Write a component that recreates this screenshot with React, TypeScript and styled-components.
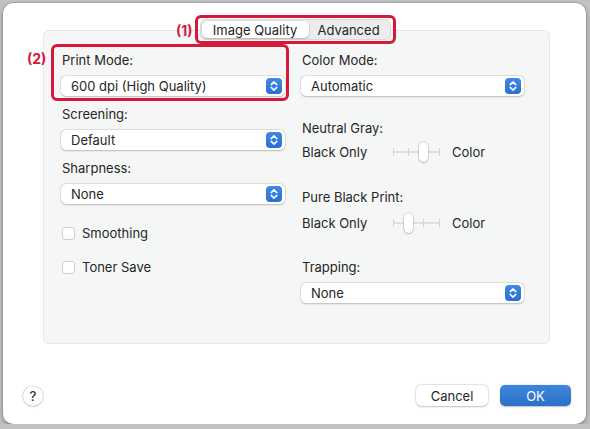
import React from 'react';
import styled, { createGlobalStyle } from 'styled-components';

const GlobalStyle = createGlobalStyle`
  html, body {
    margin: 0;
    padding: 0;
    background: #c2c2c2;
  }
  body {
    font-family: Inter, "Noto Sans", "Liberation Sans", sans-serif;
    font-size: 13px;
    color: #262626;
  }
`;

const Window = styled.div`
  width: 583px;
  height: 421px;
  margin: 3px 0 0 3px;
  box-sizing: border-box;
  background: #fff;
  border-radius: 10px;
  box-shadow: 0 0 0 0.5px rgba(0, 0, 0, 0.25), 0 3px 6px rgba(0, 0, 0, 0.25);
  display: flex;
  flex-direction: column;
  padding: 12px 15px 18px 20px;
`;

const TabsRow = styled.div`
  display: flex;
  justify-content: center;
  padding-right: 4px;
  position: relative;
  z-index: 1;
`;

const Callout = styled.div`
  position: relative;
  border: 3px solid #d6183a;
  border-radius: 6px;
  padding: 1px 2px;
  background: transparent;
`;

const CalloutTag = styled.span`
  position: absolute;
  right: calc(100% + 5px);
  top: 50%;
  transform: translateY(-50%);
  color: #d6183a;
  font-weight: 700;
  font-size: 14px;
  white-space: nowrap;
`;

const Segmented = styled.div`
  display: flex;
  height: 21px;
  box-sizing: border-box;
  background: #ececec;
  border: 0.5px solid #dadada;
  border-radius: 6px;
  padding: 1px;
`;

const Tab = styled.div<{ $active?: boolean }>`
  display: flex;
  align-items: center;
  justify-content: center;
  width: ${(p) => (p.$active ? '107px' : '80px')};
  border-radius: 5px;
  background: ${(p) => (p.$active ? '#fff' : 'transparent')};
  box-shadow: ${(p) =>
    p.$active ? '0 0 0 0.5px rgba(0,0,0,0.12), 0 1px 1.5px rgba(0,0,0,0.18)' : 'none'};
  color: #262626;
  font-size: 13px;
`;

const GroupBox = styled.div`
  margin: -14px 21px 0 20px;
  height: 314px;
  box-sizing: border-box;
  background: #f5f6f6;
  border: 0.5px solid #e6e7e7;
  border-radius: 6px;
  padding: 21px 0 0 17px;
  display: grid;
  grid-template-columns: 224px 223px;
  column-gap: 16px;
  align-items: start;
`;

const Column = styled.div`
  display: flex;
  flex-direction: column;
`;

const Field = styled.div`
  position: relative;
  display: flex;
  flex-direction: column;
`;

const FieldFrame = styled.div`
  position: absolute;
  top: -8px;
  left: -10px;
  right: -4px;
  bottom: -5px;
  border: 3px solid #d6183a;
  border-radius: 6px;
  pointer-events: none;
`;

const FieldTag = styled.span`
  position: absolute;
  left: -34px;
  top: -1px;
  color: #d6183a;
  font-weight: 700;
  font-size: 14px;
  line-height: 16px;
`;

const Label = styled.div<{ $top?: number }>`
  margin-top: ${(p) => p.$top ?? 0}px;
  line-height: 16px;
  height: 16px;
  margin-bottom: 8px;
  padding-left: 1px;
  white-space: nowrap;
`;

const Popup = styled.div`
  position: relative;
  height: 20px;
  box-sizing: border-box;
  background: #fff;
  border-radius: 5px;
  box-shadow: 0 0 0 0.5px rgba(0, 0, 0, 0.1), 0 0.5px 2px rgba(0, 0, 0, 0.2);
  display: flex;
  align-items: center;
  padding: 0 3px 0 10px;
  line-height: 20px;
`;

const PopupText = styled.span`
  flex: 1;
`;

const Stepper = styled.span`
  width: 16px;
  height: 16px;
  border-radius: 4px;
  background: linear-gradient(#3f8ae4, #2a6fd2);
  display: flex;
  align-items: center;
  justify-content: center;
`;

const CheckRow = styled.label<{ $top: number }>`
  display: flex;
  align-items: center;
  gap: 7px;
  margin-top: ${(p) => p.$top}px;
  height: 16px;
  padding-left: 1px;
`;

const Box = styled.span`
  width: 13px;
  height: 13px;
  box-sizing: border-box;
  border-radius: 3px;
  background: #fff;
  border: 1px solid #cfcfcf;
`;

const SliderRow = styled.div<{ $top: number }>`
  display: flex;
  align-items: center;
  height: 20px;
  margin-top: ${(p) => p.$top}px;
  padding-left: 1px;
`;

const SliderEnd = styled.span`
  width: 91px;
`;

const Track = styled.div`
  position: relative;
  width: 47px;
  height: 20px;
  margin-right: 12px;
`;

const Rail = styled.div`
  position: absolute;
  left: 0;
  right: 0;
  top: 9px;
  height: 2px;
  background: #e0e0e0;
`;

const Tick = styled.div`
  position: absolute;
  top: 6px;
  width: 1px;
  height: 8px;
  background: #d4d4d4;
`;

const Thumb = styled.div`
  position: absolute;
  top: 0;
  width: 9px;
  height: 20px;
  box-sizing: border-box;
  background: #fff;
  border-radius: 5px;
  box-shadow: 0 0 0 0.5px rgba(0, 0, 0, 0.2), 0 1px 2px rgba(0, 0, 0, 0.2);
`;

const Footer = styled.div`
  margin-top: auto;
  display: flex;
  align-items: center;
`;

const Help = styled.div`
  width: 20px;
  height: 20px;
  border-radius: 50%;
  background: #fff;
  box-shadow: 0 0 0 0.5px rgba(0, 0, 0, 0.15), 0 0.5px 2px rgba(0, 0, 0, 0.2);
  display: flex;
  align-items: center;
  justify-content: center;
  font-size: 13px;
  font-weight: 500;
  color: #333;
`;

const Button = styled.div<{ $primary?: boolean; $w: number }>`
  width: ${(p) => p.$w}px;
  height: 21px;
  border-radius: 5px;
  display: flex;
  align-items: center;
  justify-content: center;
  font-size: 13px;
  background: ${(p) => (p.$primary ? 'linear-gradient(#3e86dc, #2c70c8)' : '#fff')};
  color: ${(p) => (p.$primary ? '#fff' : '#262626')};
  box-shadow: ${(p) =>
    p.$primary
      ? '0 0.5px 1.5px rgba(0,0,0,0.25)'
      : '0 0 0 0.5px rgba(0,0,0,0.12), 0 0.5px 2px rgba(0,0,0,0.2)'};
`;

const Buttons = styled.div`
  margin-left: auto;
  display: flex;
  gap: 12px;
`;

const Chevrons = () => (
  <svg width="10" height="12" viewBox="0 0 10 12">
    <path d="M2.2 4.6 L5 1.9 L7.8 4.6 M2.2 7.4 L5 10.1 L7.8 7.4" fill="none" stroke="#fff" strokeWidth="1.5" strokeLinecap="round" strokeLinejoin="round" />
  </svg>
);

const Select = ({ value }: { value: string }) => (
  <Popup>
    <PopupText>{value}</PopupText>
    <Stepper>
      <Chevrons />
    </Stepper>
  </Popup>
);

const ticks = [0, 15, 30, 46];

const Slider = ({ top, stop }: { top: number; stop: number }) => (
  <SliderRow $top={top}>
    <SliderEnd>Black Only</SliderEnd>
    <Track>
      <Rail />
      {ticks.map((x) => (
        <Tick key={x} style={{ left: x }} />
      ))}
      <Thumb style={{ left: ticks[stop] - 4 }} />
    </Track>
    <span>Color</span>
  </SliderRow>
);

export default function App() {
  return (
    <>
      <GlobalStyle />
      <Window>
        <TabsRow>
          <Callout>
            <CalloutTag>(1)</CalloutTag>
            <Segmented>
              <Tab $active>Image Quality</Tab>
              <Tab>Advanced</Tab>
            </Segmented>
          </Callout>
        </TabsRow>
        <GroupBox>
          <Column>
            <Field>
              <FieldFrame />
              <FieldTag>(2)</FieldTag>
              <Label>Print Mode:</Label>
              <Select value="600 dpi (High Quality)" />
            </Field>
            <Label $top={10}>Screening:</Label>
            <Select value="Default" />
            <Label $top={10}>Sharpness:</Label>
            <Select value="None" />
            <CheckRow $top={21}>
              <Box />
              Smoothing
            </CheckRow>
            <CheckRow $top={18}>
              <Box />
              Toner Save
            </CheckRow>
          </Column>
          <Column>
            <Label>Color Mode:</Label>
            <Select value="Automatic" />
            <Label $top={24}>Neutral Gray:</Label>
            <Slider top={-2} stop={2} />
            <Label $top={27}>Pure Black Print:</Label>
            <Slider top={0} stop={1} />
            <Label $top={26}>Trapping:</Label>
            <Select value="None" />
          </Column>
        </GroupBox>
        <Footer>
          <Help>?</Help>
          <Buttons>
            <Button $w={72}>Cancel</Button>
            <Button $primary $w={71}>OK</Button>
          </Buttons>
        </Footer>
      </Window>
    </>
  );
}
